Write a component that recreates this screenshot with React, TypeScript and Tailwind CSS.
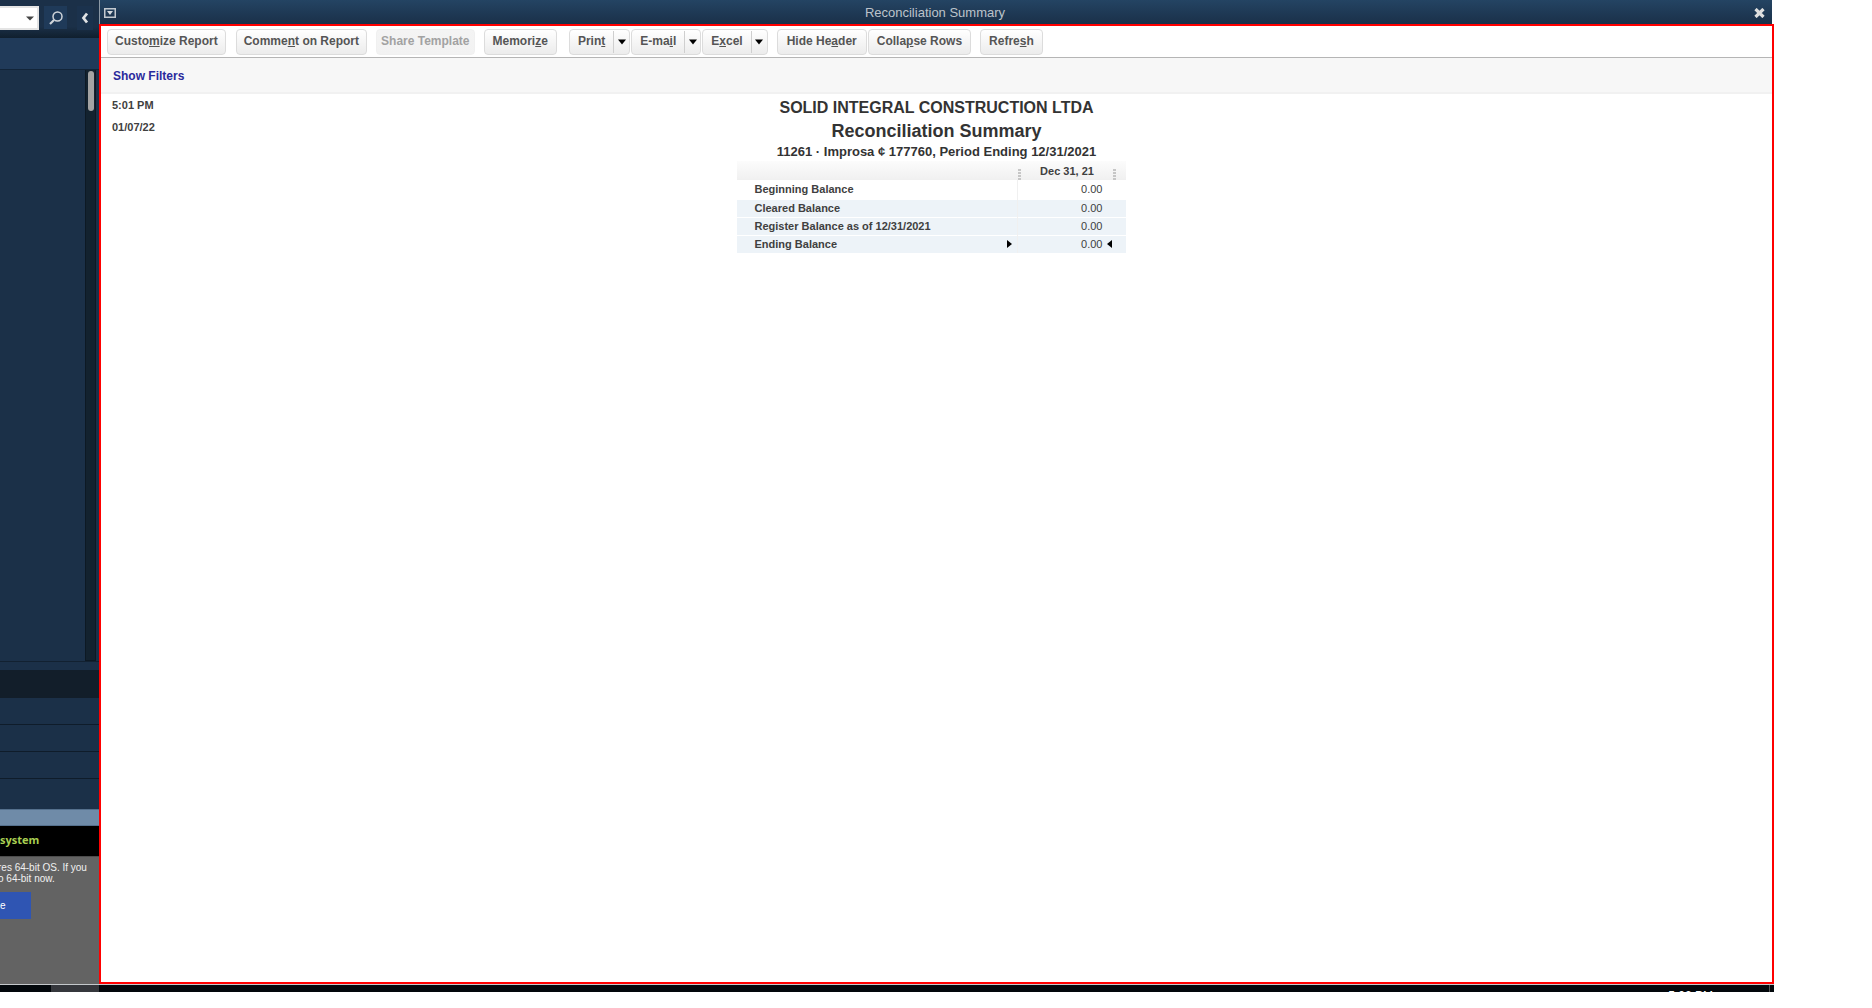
import type { ReactNode } from "react";

function ToolButton({
  children,
  disabled = false,
  padding = "px-2",
}: {
  children: ReactNode;
  disabled?: boolean;
  padding?: string;
}) {
  return (
    <button
      type="button"
      disabled={disabled}
      className={`h-[26px] rounded-sm border border-[#dcdcdc] bg-linear-to-b from-white to-[#ececec] pb-[2px] text-xs font-bold whitespace-nowrap text-[#555] disabled:border-[#f0f0f0] disabled:from-[#f4f4f4] disabled:to-[#f2f2f2] disabled:text-[#a2a2a2] ${padding}`}
    >
      {children}
    </button>
  );
}

function SplitButton({ label, children }: { label: string; children: ReactNode }) {
  return (
    <div className="flex h-[26px] rounded-sm border border-[#dcdcdc] bg-linear-to-b from-white to-[#ececec]">
      <button type="button" className="px-2 pb-[2px] text-xs font-bold text-[#555]">
        {children}
      </button>
      <button
        type="button"
        aria-label={`${label} options`}
        className="my-px flex w-4 items-center justify-center border-l border-[#cfcfcf]"
      >
        <svg width="8" height="6" viewBox="0 0 8 6" aria-hidden="true">
          <path d="M0 0.5H8L4 5.5Z" fill="#000" />
        </svg>
      </button>
    </div>
  );
}

function Grip() {
  return (
    <svg width="3" height="11" viewBox="0 0 3 11" aria-hidden="true">
      <path d="M0 0h3v2H0zM0 3h3v2H0zM0 6h3v2H0zM0 9h3v2H0z" fill="#c6c6c6" />
    </svg>
  );
}

function Sidebar() {
  return (
    <aside className="flex w-[99px] shrink-0 flex-col overflow-hidden bg-[#1b3048]">
      <div className="flex h-[38px] shrink-0 items-start bg-linear-to-b from-[#1b3048] from-70% to-[#101f2e] pt-[6px]">
        <button
          type="button"
          aria-label="Search scope"
          className="flex h-6 w-[39px] items-center justify-end border-2 border-l-0 border-[#e4e4e4] bg-white pr-[3px]"
        >
          <svg width="8" height="5" viewBox="0 0 8 5" aria-hidden="true">
            <path d="M0 0.5H8L4 4.5Z" fill="#444" />
          </svg>
        </button>
        <button
          type="button"
          aria-label="Search"
          className="ml-[5px] flex h-[23px] w-[23px] items-center justify-center bg-[#1f3a59]"
        >
          <svg width="14" height="14" viewBox="0 0 14 14" fill="none" stroke="#d0d5da" aria-hidden="true">
            <circle cx="8.5" cy="5.5" r="4.5" strokeWidth="1.5" />
            <path d="M5 9L1 13" strokeWidth="2.2" />
          </svg>
        </button>
        <button
          type="button"
          aria-label="Collapse sidebar"
          className="ml-[10px] flex h-6 w-4 items-center justify-center bg-[#1b324d]"
        >
          <svg width="8" height="12" viewBox="0 0 8 12" fill="none" stroke="#e0e2e4" aria-hidden="true">
            <path d="M6 1.5L2.5 6L6 10.5" strokeWidth="2.8" />
          </svg>
        </button>
      </div>
      <div className="h-8 shrink-0 border-b border-[#122438] bg-[#203a59]" />
      <div className="flex min-h-0 flex-1 justify-end border-b border-[#122131] pr-[3px]">
        <div className="flex w-[11px] justify-center border border-t-0 border-[#0d1924] bg-[#13222f]">
          <div className="mt-px h-10 w-[6px] rounded-full bg-[#a3a3a3]" />
        </div>
      </div>
      <div className="h-2 shrink-0" />
      <div className="h-7 shrink-0 bg-[#121e2a]" />
      <div className="h-[27px] shrink-0 border-b border-[#0f1c2a]" />
      <div className="h-[27px] shrink-0 border-b border-[#0f1c2a]" />
      <div className="h-[27px] shrink-0 border-b border-[#0f1c2a]" />
      <div className="h-[30px] shrink-0" />
      <div className="h-[17px] shrink-0 border-y border-[#55708d] bg-[#6f8ba8]" />
      <div className="flex h-[30px] shrink-0 items-center bg-black">
        <h2 className="pb-px font-['Open_Sans',sans-serif] text-[11px] font-bold text-[#a9cf52]">system</h2>
      </div>
      <div className="h-32 shrink-0 border-t border-[#4c4c4c] bg-[#636363] pt-[5px]">
        <p className="-ml-[2px] text-[10px] leading-[11px] whitespace-nowrap text-[#f0f0f0]">
          res 64-bit OS. If you
          <br />o 64-bit now.
        </p>
        <button
          type="button"
          className="mt-2 flex h-[27px] w-[31px] items-center bg-[#2f55b3] text-[10px] text-white"
        >
          e
        </button>
      </div>
    </aside>
  );
}

const rows = [
  { label: "Beginning Balance", value: "0.00" },
  { label: "Cleared Balance", value: "0.00" },
  { label: "Register Balance as of 12/31/2021", value: "0.00" },
  { label: "Ending Balance", value: "0.00", selected: true },
];

function ReportTable() {
  return (
    <table className="mr-[11px] w-[389px] table-fixed border-collapse text-[11px] text-[#404040]">
      <colgroup>
        <col />
        <col className="w-[108px]" />
      </colgroup>
      <thead>
        <tr className="h-[19px] bg-linear-to-b from-[#fcfcfc] to-[#f0f0f0]">
          <td />
          <th scope="col" className="p-0 font-bold">
            <div className="flex h-[18px] items-end justify-between pr-[9px]">
              <Grip />
              <span className="mb-px leading-4">Dec 31, 21</span>
              <Grip />
            </div>
          </th>
        </tr>
      </thead>
      <tbody>
        {rows.map((row, i) => (
          <tr key={row.label} className={i === 0 ? "h-[19px]" : "h-[18px] border-t border-white bg-[#edf3f8]"}>
            <th scope="row" className="p-0 pr-[5px] pl-[18px] text-left font-bold">
              <div className="flex items-center justify-between leading-[17px]">
                {row.label}
                {row.selected && (
                  <svg width="5" height="8" viewBox="0 0 5 8" aria-hidden="true">
                    <path d="M0 0L5 4L0 8Z" fill="#000" />
                  </svg>
                )}
              </div>
            </th>
            <td className="border-l border-[#f0f0f0] p-0">
              <div className="flex items-center leading-[17px] font-normal">
                <span className="flex-1 text-right">{row.value}</span>
                <span className="flex w-[23px] pl-1">
                  {row.selected && (
                    <svg width="5" height="8" viewBox="0 0 5 8" aria-hidden="true">
                      <path d="M5 0L0 4L5 8Z" fill="#000" />
                    </svg>
                  )}
                </span>
              </div>
            </td>
          </tr>
        ))}
      </tbody>
    </table>
  );
}

function ReportWindow() {
  return (
    <main className="flex min-w-0 flex-1 flex-col">
      <div className="mr-[2px] flex h-6 shrink-0 items-center border-l border-[#8b98a5] bg-linear-to-b from-[#244463] to-[#1a3049] px-1 pt-[2px]">
        <button type="button" aria-label="Window menu">
          <svg width="12" height="10" viewBox="0 0 12 10" aria-hidden="true">
            <rect x="0.75" y="0.75" width="10.5" height="8.5" fill="none" stroke="#c3c9cf" strokeWidth="1.5" />
            <path d="M3 3H9L6 7Z" fill="#d6dade" />
          </svg>
        </button>
        <h1 className="flex-1 text-center text-[13px] text-[#bcc3ca]">Reconciliation Summary</h1>
        <button type="button" aria-label="Close" className="mr-[3px]">
          <svg width="11" height="10" viewBox="0 0 11 10" aria-hidden="true">
            <path d="M1.5 1L9.5 9M9.5 1L1.5 9" stroke="#dedede" strokeWidth="3.2" />
          </svg>
        </button>
      </div>
      <div className="flex min-h-0 flex-1 flex-col border-2 border-[#ff0000] bg-white">
        <div className="flex h-8 shrink-0 items-center border-b border-[#b5b5b5] pl-[6px]">
          <ToolButton padding="px-[7px]">Custo<u>m</u>ize Report</ToolButton>
          <div className="ml-[10px] flex gap-[9px]">
            <ToolButton padding="px-[7px]">Comme<u>n</u>t on Report</ToolButton>
            <ToolButton disabled padding="px-1">Share Template</ToolButton>
            <ToolButton>Memori<u>z</u>e</ToolButton>
          </div>
          <div className="ml-3 flex gap-px">
            <SplitButton label="Print">Prin<u>t</u></SplitButton>
            <SplitButton label="E-mail">E-ma<u>i</u>l</SplitButton>
            <SplitButton label="Excel">E<u>x</u>cel</SplitButton>
          </div>
          <div className="ml-[9px] flex gap-px">
            <ToolButton padding="px-[9px]">Hide He<u>a</u>der</ToolButton>
            <ToolButton>Colla<u>p</u>se Rows</ToolButton>
          </div>
          <div className="ml-[9px] flex">
            <ToolButton>Refre<u>s</u>h</ToolButton>
          </div>
        </div>
        <div className="flex h-9 shrink-0 items-center border-b-2 border-[#f1f1f1] bg-[#f7f7f7] pt-[2px] pl-3">
          <button type="button" className="text-xs font-bold text-[#2a2a9c]">Show Filters</button>
        </div>
        <section className="grid grid-cols-[1fr_auto_1fr] items-start text-[#333]">
          <div className="pl-[11px] text-[11px] leading-[22px] font-bold text-[#404040]">
            <p>5:01 PM</p>
            <p>01/07/22</p>
          </div>
          <div className="flex flex-col items-center pt-[3px] font-bold">
            <h2 className="text-base leading-[22px]">SOLID INTEGRAL CONSTRUCTION LTDA</h2>
            <h3 className="text-lg leading-6">Reconciliation Summary</h3>
            <p className="text-[13px] leading-[18px]">11261 · Improsa ¢ 177760, Period Ending 12/31/2021</p>
            <ReportTable />
          </div>
        </section>
      </div>
    </main>
  );
}

export default function App() {
  return (
    <div className="flex h-screen flex-col bg-white pr-[98px] pb-4 font-['Liberation_Sans',Arial,sans-serif]">
      <div className="flex min-h-0 flex-1">
        <Sidebar />
        <ReportWindow />
      </div>
      <footer className="flex h-2 shrink-0 overflow-hidden border-t border-[#c4c8cb] bg-[#02070b] pl-[51px]">
        <div className="w-12 bg-[#35373c]" />
        <time className="mr-14 ml-auto pt-[3px] text-xs leading-4 text-white">5:02 PM</time>
        <div className="mr-1 w-px bg-[#555]" />
      </footer>
    </div>
  );
}
